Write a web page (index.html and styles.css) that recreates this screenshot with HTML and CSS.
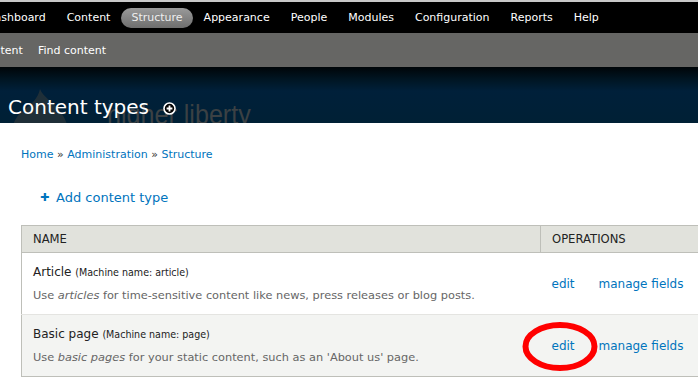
FILE: index.html
```html
<!DOCTYPE html>
<html>
<head>
<meta charset="utf-8">
<link rel="stylesheet" href="styles.css">
</head>
<body>
<div class="top-line"></div>
<nav class="toolbar">
  <ul class="menu">
    <li><a href="#">Dashboard</a></li>
    <li><a href="#">Content</a></li>
    <li class="active"><a href="#">Structure</a></li>
    <li><a href="#">Appearance</a></li>
    <li><a href="#">People</a></li>
    <li><a href="#">Modules</a></li>
    <li><a href="#">Configuration</a></li>
    <li><a href="#">Reports</a></li>
    <li><a href="#">Help</a></li>
  </ul>
</nav>
<div class="shortcuts">
  <a href="#">Add content</a>
  <a href="#">Find content</a>
</div>
<header class="branding">
  <svg class="drop" width="60" height="40" viewBox="0 0 60 40"><path d="M30 1 C33 9 44 15 50 23 C56 31 58 38 58 44 L2 44 C2 36 6 28 14 22 C22 16 28 10 30 1 Z" fill="#1f2f38"/></svg>
  <span class="slogan">higher liberty</span>
  <h1 class="page-title">Content types
    <svg class="add-icon" width="13" height="13" viewBox="0 0 13 13"><circle cx="6.5" cy="6.5" r="5.5" fill="#000" stroke="#fff" stroke-width="1.6"/><path d="M6.5 3.6v5.8M3.6 6.5h5.8" stroke="#fff" stroke-width="1.8"/></svg>
  </h1>
</header>
<main class="content">
  <div class="breadcrumb"><a href="#">Home</a> » <a href="#">Administration</a> » <a href="#">Structure</a></div>
  <div class="action-links">
    <a href="#"><span class="plus">✚</span>Add content type</a>
  </div>
  <table class="types">
    <colgroup>
      <col class="c-name"><col class="c-edit"><col class="c-fields"><col class="c-display"><col class="c-delete">
    </colgroup>
    <thead>
      <tr><th>Name</th><th colspan="4" class="ops-head">Operations</th></tr>
    </thead>
    <tbody>
      <tr class="odd">
        <td class="name-cell"><div class="type-title">Article <small>(Machine name: article)</small></div>
          <div class="desc">Use <em>articles</em> for time-sensitive content like news, press releases or blog posts.</div></td>
        <td class="op"><a href="#">edit</a></td>
        <td class="op"><a href="#">manage fields</a></td>
        <td class="op"><a href="#">manage display</a></td>
        <td class="op"><a href="#">delete</a></td>
      </tr>
      <tr class="even">
        <td class="name-cell"><div class="type-title">Basic page <small>(Machine name: page)</small></div>
          <div class="desc">Use <em>basic pages</em> for your static content, such as an 'About us' page.</div></td>
        <td class="op"><a href="#">edit</a></td>
        <td class="op"><a href="#">manage fields</a></td>
        <td class="op"><a href="#">manage display</a></td>
        <td class="op"><a href="#">delete</a></td>
      </tr>
    </tbody>
  </table>
  <svg class="annotation" width="80" height="54" viewBox="0 0 80 54"><ellipse cx="39" cy="25.5" rx="34.5" ry="21.5" fill="none" stroke="#f00" stroke-width="6"/></svg>
</main>
</body>
</html>
```

FILE: styles.css
```css
html, body {
  margin: 0;
  padding: 0;
}
body {
  width: 698px;
  height: 386px;
  overflow: hidden;
  background: #fff;
  font-family: "DejaVu Sans", Verdana, sans-serif;
  color: #333;
}
a {
  text-decoration: none;
}
.top-line {
  height: 2px;
  background: #c8c8c8;
}
.toolbar {
  height: 31px;
  background: #000;
  display: flex;
  align-items: center;
  padding-top: 1px;
  box-sizing: border-box;
}
.menu {
  list-style: none;
  margin: 0 0 0 -24.5px;
  padding: 0;
  display: flex;
  align-items: center;
}
.menu li a {
  display: block;
  padding: 0 10.5px;
  height: 20px;
  line-height: 20px;
  font-size: 11px;
  color: #fff;
  border-radius: 10px;
}
.menu li.active a {
  background: linear-gradient(#9a9a9a, #6e6e6e);
  color: #eee;
}
.shortcuts {
  height: 34px;
  background: #666664;
  display: flex;
  align-items: center;
  gap: 15px;
  margin-left: -44px;
  padding-top: 1px;
  box-sizing: border-box;
}
.shortcuts a {
  font-size: 11px;
  color: #fff;
}
.branding {
  position: relative;
  height: 56px;
  overflow: hidden;
  background: linear-gradient(#000508 0px, #001522 12px, #00203a 24px, #002035 56px);
  box-sizing: border-box;
  padding: 28px 0 0 8px;
}
.drop {
  position: absolute;
  left: 10px;
  top: 21px;
}
.slogan {
  position: absolute;
  left: 107px;
  top: 31px;
  font-family: "Liberation Sans", Arial, sans-serif;
  font-size: 27px;
  line-height: 34px;
  color: #3b4144;
  transform: scaleX(0.93);
  transform-origin: left top;
  white-space: nowrap;
}
.page-title {
  position: relative;
  margin: 0;
  font-size: 20px;
  line-height: 24px;
  font-weight: normal;
  color: #fff;
  display: flex;
  align-items: center;
  gap: 14px;
}
.add-icon {
  margin-top: 3px;
}
.content {
  position: relative;
  padding: 24px 0 0 21px;
}
.breadcrumb {
  font-size: 11px;
  line-height: 16px;
  color: #333;
}
.breadcrumb a {
  color: #0074bd;
}
.action-links {
  margin: 24px 0 18px 19px;
  line-height: 18px;
}
.action-links a {
  font-size: 13px;
  color: #0074bd;
  display: inline-flex;
  align-items: center;
}
.plus {
  font-size: 11px;
  margin-right: 6px;
  width: 10px;
}
.types {
  border-collapse: collapse;
  table-layout: fixed;
  width: 880px;
  border: 1px solid #bebfb9;
}
.c-name { width: 519px; }
.c-edit { width: 47px; }
.c-fields { width: 113px; }
.c-display { width: 122px; }
.c-delete { width: 79px; }
.types th {
  background: #e1e2dc;
  text-align: left;
  font-weight: normal;
  text-transform: uppercase;
  font-size: 11.6px;
  color: #222;
  height: 26px;
  padding: 0 11px;
  border: 1px solid #bebfb9;
}
.types td {
  border-bottom: 1px solid #e4e4e1;
}
.types tr.even td {
  background: #f3f4f2;
  border-bottom: 1px solid #bebfb9;
}
.name-cell {
  padding: 11px 11px 11px;
}
.type-title {
  font-size: 12px;
  line-height: 16px;
  color: #222;
}
.type-title small {
  font-family: "DejaVu Sans Condensed", "DejaVu Sans", sans-serif;
  font-size: 10.6px;
}
.desc {
  margin-top: 7px;
  font-size: 11.35px;
  line-height: 16px;
  color: #666;
  white-space: nowrap;
}
.op {
  padding: 0 11px;
  font-size: 12px;
  white-space: nowrap;
}
.op a {
  color: #0074bd;
}
.annotation {
  position: absolute;
  left: 521px;
  top: 198px;
}
```
